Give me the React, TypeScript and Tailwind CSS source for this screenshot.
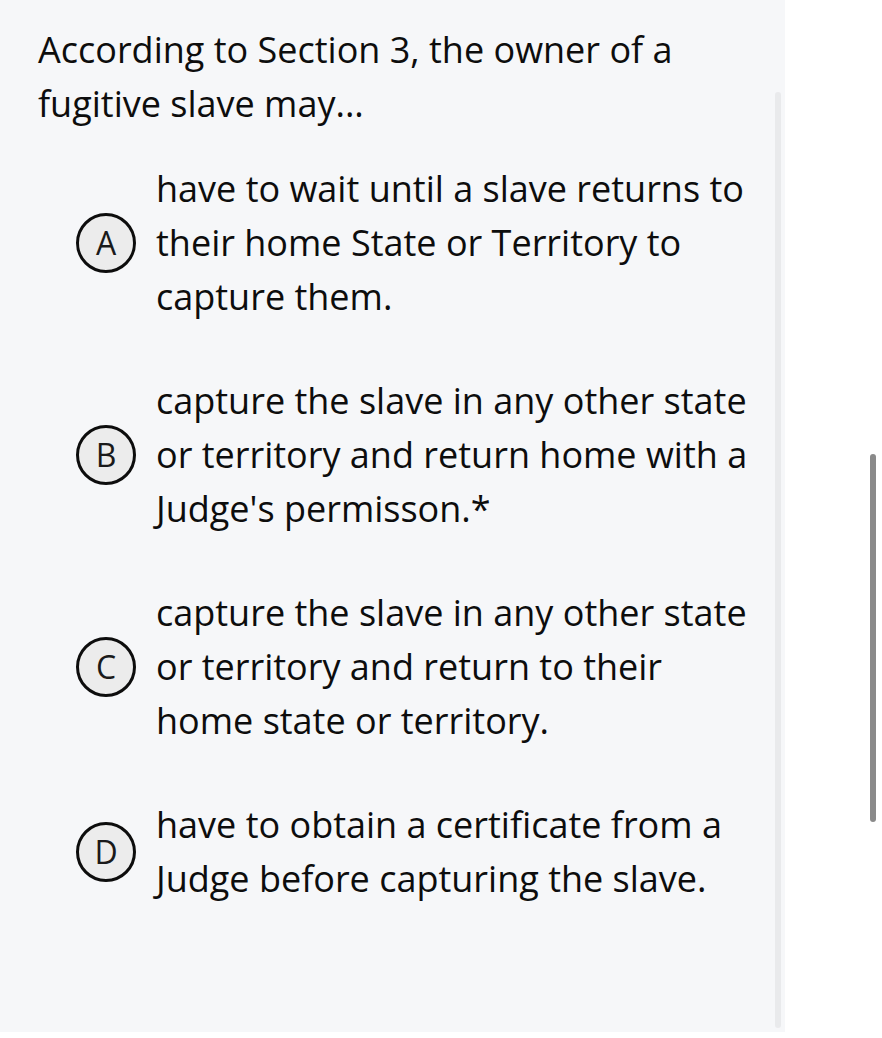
import React from "react";

const options: { letter: string; lines: string[] }[] = [
  {
    letter: "A",
    lines: ["have to wait until a slave returns to", "their home State or Territory to", "capture them."],
  },
  {
    letter: "B",
    lines: ["capture the slave in any other state", "or territory and return home with a", "Judge's permisson.*"],
  },
  {
    letter: "C",
    lines: ["capture the slave in any other state", "or territory and return to their", "home state or territory."],
  },
  {
    letter: "D",
    lines: ["have to obtain a certificate from a", "Judge before capturing the slave."],
  },
];

export default function App() {
  return (
    <div className="relative h-[1038px] w-[882px] bg-white font-['Open_Sans',sans-serif] text-[#0d0d0d]">
      <div className="relative h-[1032px] w-[785px] bg-[#f6f7f9] pl-[38px] pt-[23px]">
        <p className="text-[36px] leading-[54px]">
          According to Section 3, the owner of a
          <br />
          fugitive slave may...
        </p>
        <div className="mt-[31px] flex flex-col gap-[50px]">
          {options.map((o) => (
            <div key={o.letter} className="flex items-center pl-[38px]">
              <div className="flex h-[60px] w-[60px] shrink-0 items-center justify-center rounded-full border-[3px] border-[#0d0d0d] bg-[#ececec] text-[32px] leading-none text-[#1a1a1a]">
                {o.letter}
              </div>
              <p className="ml-[20px] whitespace-nowrap text-[36px] leading-[54px]">
                {o.lines.map((l, i) => (
                  <React.Fragment key={i}>
                    {i > 0 && <br />}
                    {l}
                  </React.Fragment>
                ))}
              </p>
            </div>
          ))}
        </div>
        <div className="absolute right-[4px] top-[92px] h-[936px] w-[6px] rounded-full bg-[#e9eaec]" />
      </div>
      <div className="absolute left-[870px] top-[454px] h-[368px] w-[6px] rounded-full bg-[#8a8a8a]" />
    </div>
  );
}
